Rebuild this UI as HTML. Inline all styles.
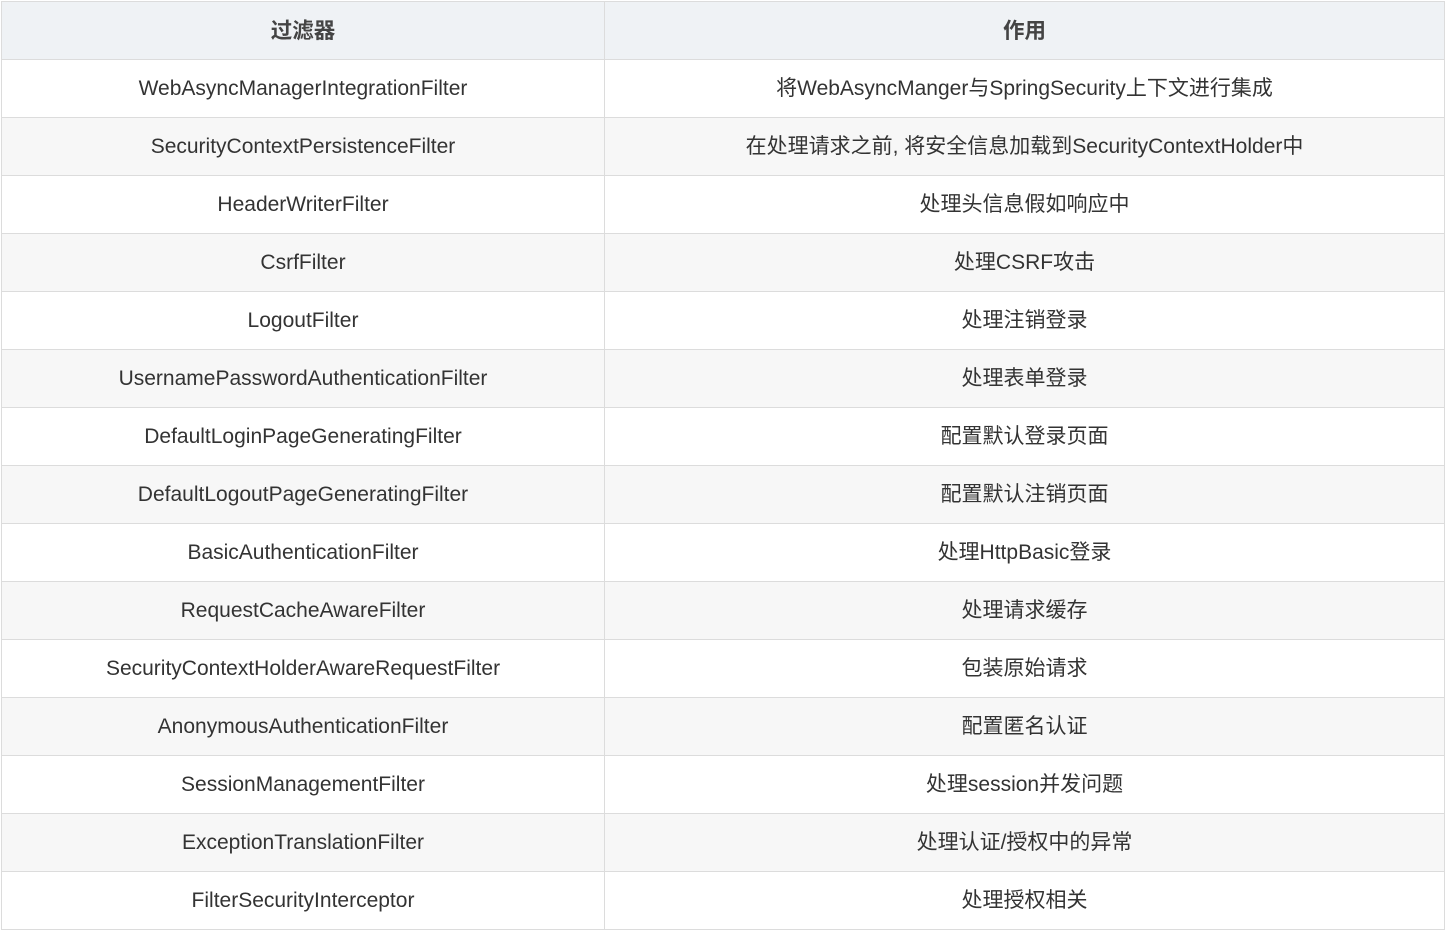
<!DOCTYPE html>
<html><head><meta charset="utf-8"><style>
html,body{margin:0;padding:0;background:#fff;}
table{position:absolute;left:1px;top:1px;border-collapse:collapse;table-layout:fixed;width:1443px;font-family:"Liberation Sans","Noto Sans CJK SC",sans-serif;font-size:21px;color:#333;}
td,th{border:1px solid #dcdcdc;height:57px;padding:0;text-align:center;vertical-align:middle;line-height:24px;}
th{background:#eff2f5;font-weight:bold;color:#444;font-size:21.5px;}
tr:nth-child(odd) td{background:#f7f7f7;}
</style></head><body>
<table>
<colgroup><col style="width:603px"><col style="width:840px"></colgroup>
<tr><th>过滤器</th><th>作用</th></tr>
<tr><td>WebAsyncManagerIntegrationFilter</td><td>将WebAsyncManger与SpringSecurity上下文进行集成</td></tr>
<tr><td>SecurityContextPersistenceFilter</td><td>在处理请求之前, 将安全信息加载到SecurityContextHolder中</td></tr>
<tr><td>HeaderWriterFilter</td><td>处理头信息假如响应中</td></tr>
<tr><td>CsrfFilter</td><td>处理CSRF攻击</td></tr>
<tr><td>LogoutFilter</td><td>处理注销登录</td></tr>
<tr><td>UsernamePasswordAuthenticationFilter</td><td>处理表单登录</td></tr>
<tr><td>DefaultLoginPageGeneratingFilter</td><td>配置默认登录页面</td></tr>
<tr><td>DefaultLogoutPageGeneratingFilter</td><td>配置默认注销页面</td></tr>
<tr><td>BasicAuthenticationFilter</td><td>处理HttpBasic登录</td></tr>
<tr><td>RequestCacheAwareFilter</td><td>处理请求缓存</td></tr>
<tr><td>SecurityContextHolderAwareRequestFilter</td><td>包装原始请求</td></tr>
<tr><td>AnonymousAuthenticationFilter</td><td>配置匿名认证</td></tr>
<tr><td>SessionManagementFilter</td><td>处理session并发问题</td></tr>
<tr><td>ExceptionTranslationFilter</td><td>处理认证/授权中的异常</td></tr>
<tr><td>FilterSecurityInterceptor</td><td>处理授权相关</td></tr>
</table>
</body></html>
